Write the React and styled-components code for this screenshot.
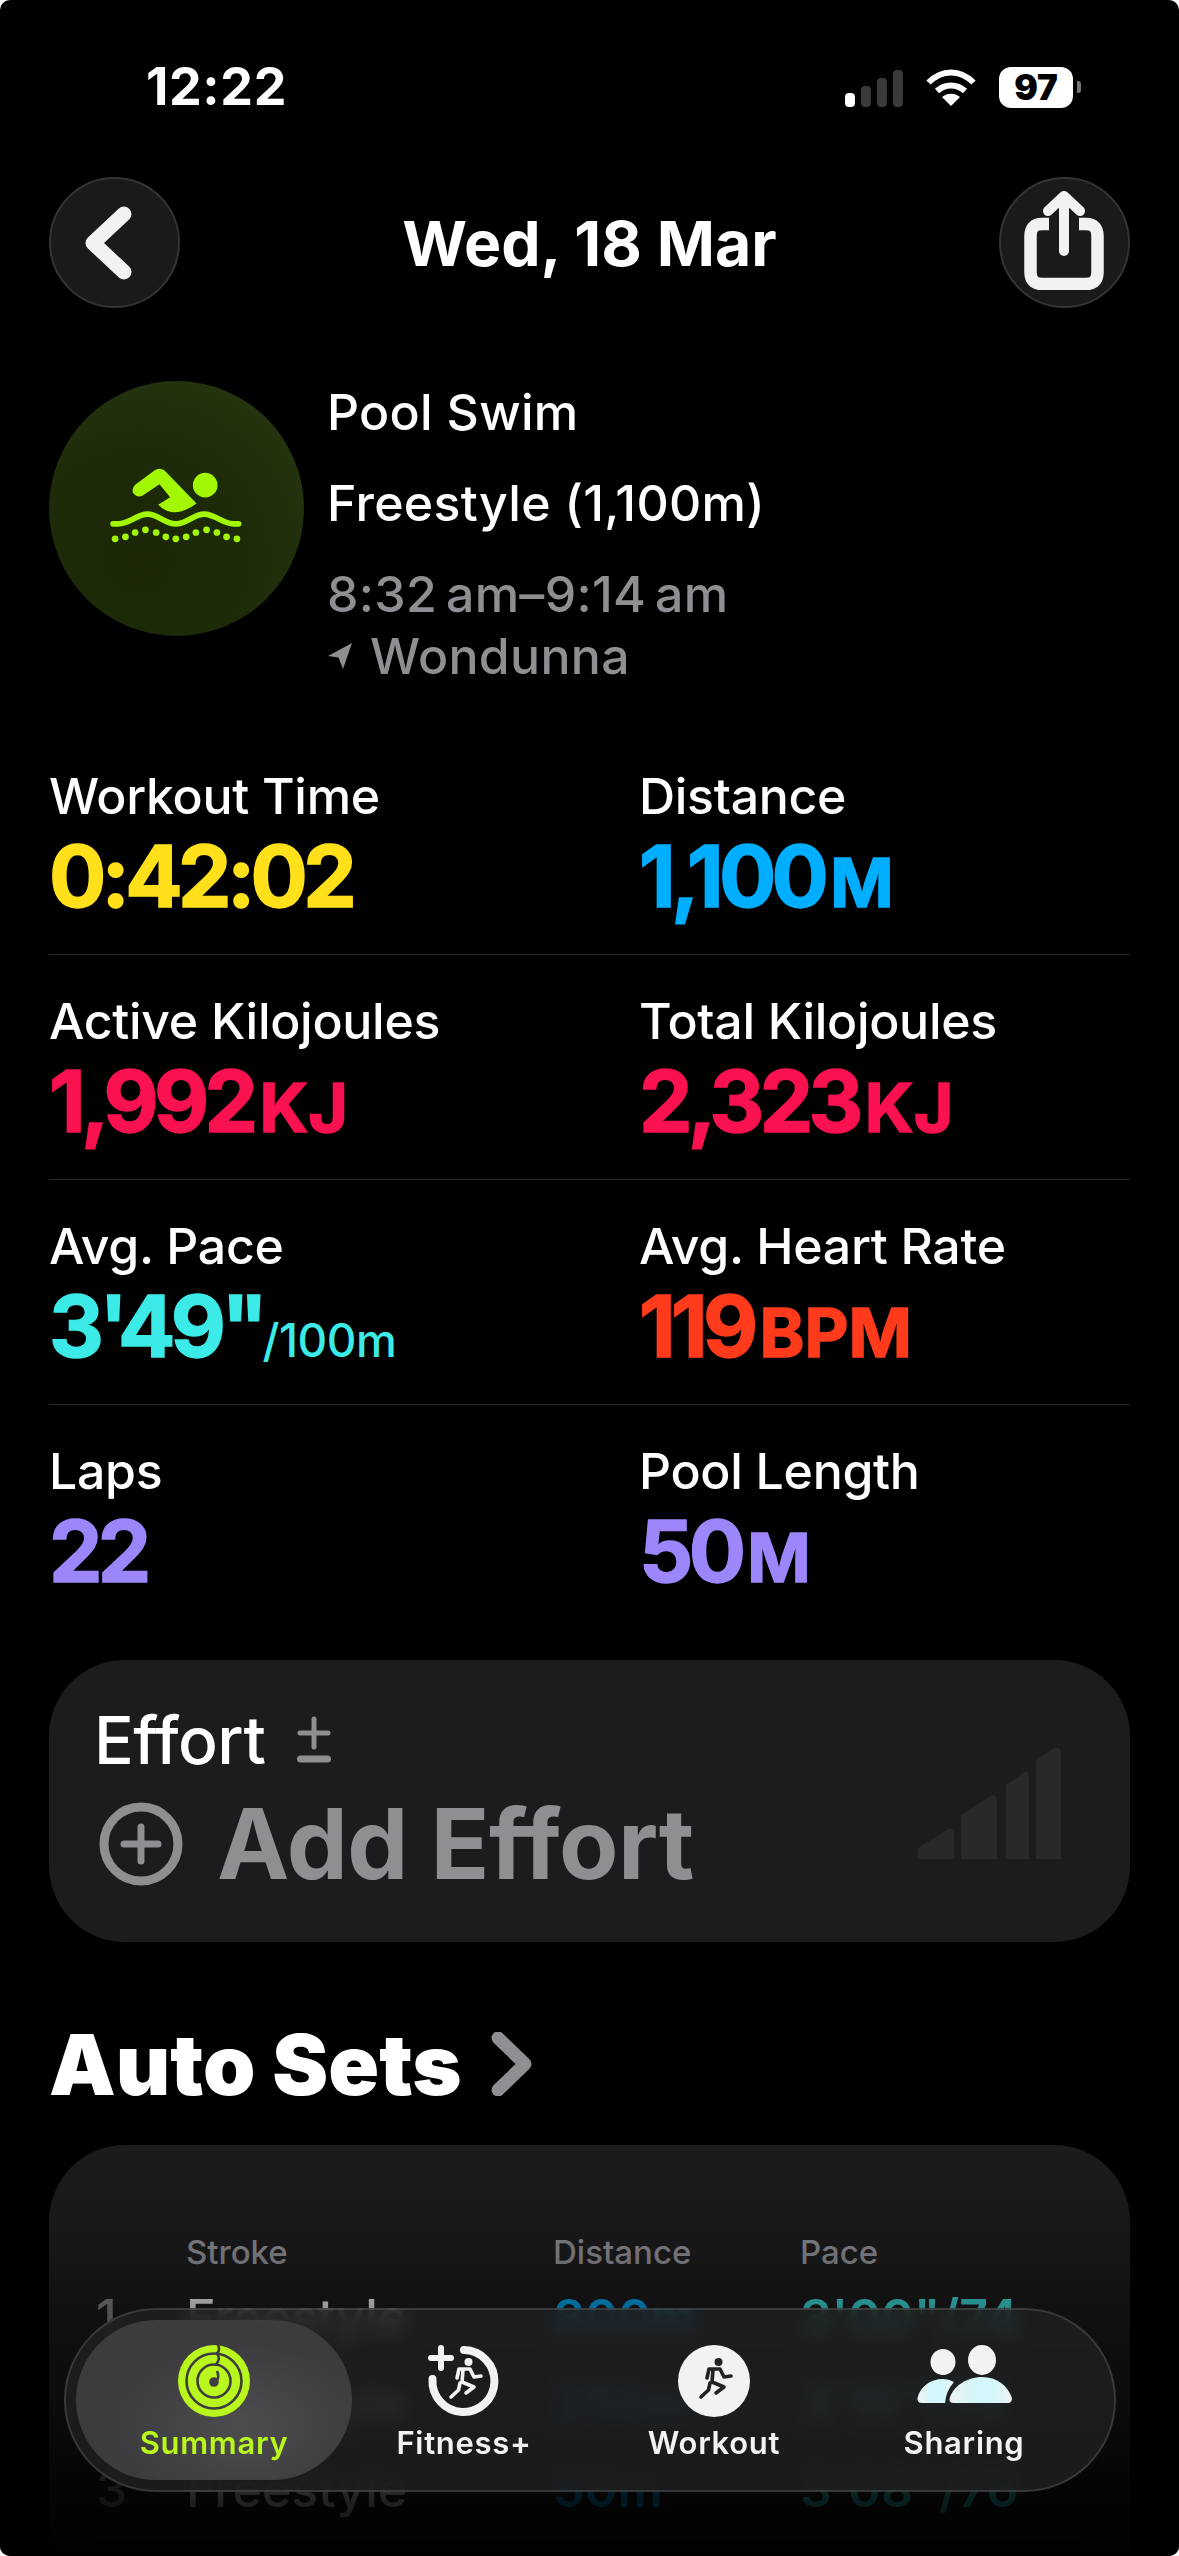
import React from "react";
import styled, { createGlobalStyle } from "styled-components";

const Global = createGlobalStyle`
  html, body { margin: 0; padding: 0; background: #fff; }
  * { box-sizing: border-box; }
`;

const SANS = `Inter, "Liberation Sans", sans-serif`;

const Screen = styled.div`
  position: relative;
  width: 1179px;
  height: 2556px;
  overflow: hidden;
  background: #000;
  color: #fff;
  font-family: ${SANS};
  padding: 0 49px;
  border-radius: 10px;
`;

const StatusBar = styled.div`
  height: 177px;
  display: flex;
  align-items: flex-start;
  justify-content: space-between;
  padding: 57px 0 0 97px;
`;
const Clock = styled.div`
  font-size: 52px;
  line-height: 60px;
  font-weight: 700;
  letter-spacing: 0.6px;
`;
const StatusIcons = styled.div`
  display: flex;
  align-items: center;
  gap: 23px;
  margin: 10px 57px 0 0;
  height: 41px;
`;
const Signal = styled.div`
  display: flex;
  align-items: flex-end;
  gap: 6px;
  height: 37px;
  margin-top: 2px;
`;
const SignalBar = styled.span`
  width: 10px;
  height: ${(p) => p.$h}px;
  border-radius: 4px;
  background: ${(p) => (p.$on ? "#fff" : "#3a3a3c")};
`;
const Battery = styled.div`
  position: relative;
  width: 74px;
  height: 41px;
  border-radius: 12px;
  background: #fff;
  color: #000;
  font-size: 35px;
  font-weight: 900;
  line-height: 41px;
  text-align: center;
  &::after {
    content: "";
    position: absolute;
    right: -8px;
    top: 14px;
    width: 4px;
    height: 12px;
    border-radius: 0 3px 3px 0;
    background: #77777b;
  }
`;

const NavBar = styled.div`
  display: flex;
  align-items: center;
  justify-content: space-between;
  height: 131px;
`;
const RoundButton = styled.div`
  width: 131px;
  height: 131px;
  border-radius: 50%;
  background: #1a1a1a;
  border: 2px solid #343434;
  display: flex;
  align-items: center;
  justify-content: center;
`;
const BackGlyph = styled.svg`
  width: 60px;
  height: 84px;
  margin-right: 14px;
`;
const ShareGlyph = styled.svg`
  width: 80px;
  height: 100px;
  margin-top: -6px;
`;
const Title = styled.div`
  font-size: 62.5px;
  font-weight: 700;
`;

const Hero = styled.div`
  display: flex;
  gap: 23px;
  margin-top: 73px;
  height: 349px;
`;
const HeroBadge = styled.div`
  width: 255px;
  height: 255px;
  flex: none;
  border-radius: 50%;
  background: radial-gradient(circle at 35% 70%, #1b2706 0%, #1e2b09 45%, #283a12 100%);
`;
const HeroText = styled.div`
  display: flex;
  flex-direction: column;
  margin-top: 1px;
`;
const HeroLine = styled.div`
  font-size: 50px;
  font-weight: 500;
  line-height: 60px;
  height: 60px;
  margin-bottom: ${(p) => p.$after ?? 31}px;
  color: ${(p) => (p.$dim ? "#8e8e93" : "#fff")};
  display: flex;
  align-items: center;
  gap: 17px;
  letter-spacing: 0.3px;
  white-space: pre;
`;

const Metrics = styled.div``;
const MetricRow = styled.div`
  display: grid;
  grid-template-columns: 590px 1fr;
  height: 225px;
  padding-top: 36px;
  border-bottom: ${(p) => (p.$last ? "none" : "1.5px solid #2a2a2c")};
`;
const Metric = styled.div`
  display: flex;
  flex-direction: column;
`;
const MetricLabel = styled.div`
  font-size: 50px;
  font-weight: 500;
  line-height: 60px;
  letter-spacing: -0.3px;
`;
const MetricValue = styled.div`
  font-size: 85px;
  font-weight: 700;
  line-height: 84px;
  margin-top: 9px;
  color: ${(p) => p.$color};
  -webkit-text-stroke: 1.5px ${(p) => p.$color};
  letter-spacing: -4.7px;
  white-space: nowrap;
`;
const MetricUnit = styled.span`
  font-size: 68px;
  letter-spacing: 0;
  margin-left: 6px;
`;
const MetricSuffix = styled.span`
  font-size: 46px;
  font-weight: 500;
  letter-spacing: -0.5px;
  -webkit-text-stroke: 0;
  margin-left: -1px;
`;

const EffortCard = styled.div`
  margin-top: 30px;
  height: 282px;
  border-radius: 76px;
  background: #1c1c1e;
  padding: 44px 41px 0 45px;
`;
const EffortHead = styled.div`
  display: flex;
  align-items: center;
  gap: 32px;
  font-size: 66px;
  font-weight: 500;
  line-height: 72px;
  letter-spacing: -0.5px;
`;
const EffortBody = styled.div`
  display: flex;
  align-items: center;
  justify-content: space-between;
  margin-top: 16px;
`;
const AddEffort = styled.div`
  display: flex;
  align-items: center;
  gap: 34px;
  color: #8e8e93;
  font-size: 97px;
  font-weight: 700;
  line-height: 104px;
  margin-left: 5px;
  letter-spacing: -0.5px;
`;
const EffortBars = styled.svg`
  width: 146px;
  height: 114px;
  margin: -80px 26px 0 0;
`;

const SectionTitle = styled.div`
  display: flex;
  align-items: center;
  gap: 28px;
  margin-top: 72px;
  height: 100px;
  font-size: 84px;
  font-weight: 900;
`;

const SetsCard = styled.div`
  margin-top: 31px;
  height: 520px;
  border-radius: 76px;
  background: #1c1c1e;
  padding: 87px 47px 0;
`;
const SetRow = styled.div`
  display: grid;
  grid-template-columns: 90px 367px 247px 1fr;
  align-items: baseline;
  height: ${(p) => p.$h}px;
  font-size: 50px;
  font-weight: 500;
  white-space: nowrap;
`;
const SetHeadCell = styled.div`
  font-size: 33px;
  font-weight: 500;
  color: #8e8e93;
`;
const SetIndex = styled.div`
  color: #8e8e93;
`;
const SetName = styled.div`
  color: #fff;
`;
const SetDistance = styled.div`
  color: #00b2ff;
  font-weight: 600;
`;
const SetPace = styled.div`
  color: #40e8e8;
  font-weight: 600;
`;
const SetDivider = styled.div`
  height: 1.5px;
  background: #38383a;
  margin-top: 6px;
`;

const BottomFade = styled.div`
  position: absolute;
  left: 0;
  right: 0;
  top: 2140px;
  bottom: 0;
  background: linear-gradient(
    to bottom,
    rgba(0, 0, 0, 0) 0px,
    rgba(0, 0, 0, 0.2) 115px,
    rgba(0, 0, 0, 0.42) 170px,
    rgba(0, 0, 0, 0.58) 260px,
    rgba(0, 0, 0, 0.87) 360px,
    rgba(0, 0, 0, 0.96) 416px
  );
`;

const TabBar = styled.div`
  position: absolute;
  left: 64px;
  top: 2308px;
  width: 1052px;
  height: 184px;
  border-radius: 92px;
  background: rgba(32, 32, 34, 0.8);
  backdrop-filter: blur(9px);
  -webkit-backdrop-filter: blur(9px);
  box-shadow: inset 0 0 0 2px rgba(255, 255, 255, 0.13);
  display: grid;
  grid-template-columns: repeat(4, 250px);
  padding-left: 25px;
`;
const ActivePill = styled.div`
  position: absolute;
  left: 12px;
  top: 12px;
  width: 276px;
  height: 160px;
  border-radius: 80px;
  background: radial-gradient(ellipse at 60% 65%, rgba(80, 80, 82, 0.95) 0%, rgba(62, 62, 64, 0.95) 55%);
`;
const Tab = styled.div`
  position: relative;
  display: flex;
  flex-direction: column;
  align-items: center;
  padding-top: 33px;
  color: ${(p) => (p.$active ? "#b8f61e" : "#f2f2f2")};
`;
const TabIcon = styled.svg`
  width: ${(p) => p.$w || 80}px;
  height: 80px;
  display: block;
`;
const TabLabel = styled.div`
  margin-top: 4px;
  font-size: 31px;
  line-height: 36px;
  font-weight: 600;
  letter-spacing: 0.7px;
`;

const Runner = ({ color, sw = 4.6 }) => (
  <g fill="none" stroke={color} strokeWidth={sw} strokeLinecap="round" strokeLinejoin="round">
    <circle cx="44.5" cy="21" r="4" fill={color} stroke="none" />
    <path d="M33 37 L35 28 L46 28 L50 36 L57 35" />
    <path d="M39 29 L38 41 L50 46 L42 52" />
    <path d="M36 42 L34.5 49 L27 56" />
  </g>
);

const SwimIcon = () => (
  <svg viewBox="25 33 764 764" width="255" height="255">
    <g fill="#a2f703">
      <circle cx="493" cy="345" r="37" />
      <path d="M343 300 Q358 291 372 302 L467 400 Q430 428 395 426 Q372 424 352 404 L388 381 L356 342 L306 376 Q290 384 278 370 Q270 356 284 343 Z" />
      {[[223,506],[254,500],[283,487],[314,479],[346,487],[375,500],[405,506],[436,500],[465,487],[497,479],[528,487],[557,500],[588,506]].map(([x,y],i)=>(
        <circle key={i} cx={x} cy={y} r="10" />
      ))}
    </g>
    <path
      d="M217 461 H232 C268 461 288 432 320 432 C352 432 372 461 405 461 C438 461 458 432 490 432 C522 432 546 461 578 461 H593"
      fill="none"
      stroke="#a2f703"
      strokeWidth="17"
      strokeLinecap="round"
    />
  </svg>
);

export default function App() {
  return (
    <>
      <Global />
      <Screen>
        <StatusBar>
          <Clock>12:22</Clock>
          <StatusIcons>
            <Signal>
              <SignalBar $h={14} $on />
              <SignalBar $h={21} />
              <SignalBar $h={29} />
              <SignalBar $h={37} />
            </Signal>
            <svg width="50" height="37" viewBox="0 0 50 37">
              <g fill="none" stroke="#fff" strokeWidth="6">
                <path d="M2.5 13.5 C16 0 34 0 47.5 13.5" />
                <path d="M11 22 C19 14.5 31 14.5 39 22" />
              </g>
              <path d="M25 37 L16 28 C21 23.5 29 23.5 34 28 Z" fill="#fff" />
            </svg>
            <Battery>97</Battery>
          </StatusIcons>
        </StatusBar>

        <NavBar>
          <RoundButton>
            <BackGlyph viewBox="0 0 60 84">
              <path d="M46 13 L15 42 L46 71" fill="none" stroke="#f2f2f2" strokeWidth="15" strokeLinecap="round" strokeLinejoin="round" />
            </BackGlyph>
          </RoundButton>
          <Title>Wed, 18 Mar</Title>
          <RoundButton>
            <ShareGlyph viewBox="0 0 80 100">
              <g fill="none" stroke="#f2f2f2" strokeLinecap="round" strokeLinejoin="round">
                <path d="M25 34 H18 Q6.5 34 6.5 46 V82 Q6.5 94 18 94 H62 Q73.5 94 73.5 82 V46 Q73.5 34 62 34 H55" strokeWidth="12.5" strokeLinecap="butt" />
                <path d="M40 61 V10" strokeWidth="10" />
                <path d="M24 21 L40 6 L56 21" strokeWidth="10" />
              </g>
            </ShareGlyph>
          </RoundButton>
        </NavBar>

        <Hero>
          <HeroBadge>
            <SwimIcon />
          </HeroBadge>
          <HeroText>
            <HeroLine>Pool Swim</HeroLine>
            <HeroLine>Freestyle (1,100m)</HeroLine>
            <HeroLine $dim $after={2}>{"8:32\u2009am–9:14\u2009am"}</HeroLine>
            <HeroLine $dim $after={0}>
              <svg width="26" height="28" viewBox="0 0 26 28">
                <path d="M25 1 L16 27 L11.5 15.5 L1 14 Z" fill="#8e8e93" />
              </svg>
              Wondunna
            </HeroLine>
          </HeroText>
        </Hero>

        <Metrics>
          <MetricRow>
            <Metric>
              <MetricLabel>Workout Time</MetricLabel>
              <MetricValue $color="#ffe01a">0:42:02</MetricValue>
            </Metric>
            <Metric>
              <MetricLabel>Distance</MetricLabel>
              <MetricValue $color="#00aeff">1,100<MetricUnit>M</MetricUnit></MetricValue>
            </Metric>
          </MetricRow>
          <MetricRow>
            <Metric>
              <MetricLabel>Active Kilojoules</MetricLabel>
              <MetricValue $color="#fa1150">1,992<MetricUnit>KJ</MetricUnit></MetricValue>
            </Metric>
            <Metric>
              <MetricLabel>Total Kilojoules</MetricLabel>
              <MetricValue $color="#fa1150">2,323<MetricUnit>KJ</MetricUnit></MetricValue>
            </Metric>
          </MetricRow>
          <MetricRow>
            <Metric>
              <MetricLabel>Avg. Pace</MetricLabel>
              <MetricValue $color="#3ceae7">3'49"<MetricSuffix>/100m</MetricSuffix></MetricValue>
            </Metric>
            <Metric>
              <MetricLabel>Avg. Heart Rate</MetricLabel>
              <MetricValue $color="#ff3b1c">119<MetricUnit>BPM</MetricUnit></MetricValue>
            </Metric>
          </MetricRow>
          <MetricRow $last>
            <Metric>
              <MetricLabel>Laps</MetricLabel>
              <MetricValue $color="#9d86fb">22</MetricValue>
            </Metric>
            <Metric>
              <MetricLabel>Pool Length</MetricLabel>
              <MetricValue $color="#9d86fb">50<MetricUnit>M</MetricUnit></MetricValue>
            </Metric>
          </MetricRow>
        </Metrics>

        <EffortCard>
          <EffortHead>
            Effort
            <svg width="34" height="48" viewBox="0 0 34 48">
              <g stroke="#8e8e93" strokeLinecap="round" fill="none">
                <path d="M17 3 V31" strokeWidth="5" />
                <path d="M3 17 H31" strokeWidth="5" />
                <path d="M3.5 43 H30.5" strokeWidth="7" />
              </g>
            </svg>
          </EffortHead>
          <EffortBody>
            <AddEffort>
              <svg width="84" height="84" viewBox="0 0 84 84">
                <circle cx="42" cy="42" r="37" fill="none" stroke="#8e8e93" strokeWidth="9" />
                <path d="M42 25 V59 M25 42 H59" fill="none" stroke="#8e8e93" strokeWidth="7" strokeLinecap="round" />
              </svg>
              Add Effort
            </AddEffort>
            <EffortBars viewBox="0 0 146 114">
              <g fill="#29292c">
                <path d="M1 112 V101 L28 84 Q37 77 37 90 V112 Z" />
                <path d="M44 112 V68 L72 50 Q80 44 80 56 V112 Z" />
                <path d="M89 112 V38 L106 26 Q112 22 112 32 V112 Z" />
                <path d="M119 112 V12 L136 2 Q144 -2 144 8 V112 Z" />
              </g>
            </EffortBars>
          </EffortBody>
        </EffortCard>

        <SectionTitle>
          Auto Sets
          <svg width="44" height="64" viewBox="0 0 44 64">
            <path d="M8 6 L35 32 L8 58" fill="none" stroke="#8e8e93" strokeWidth="13" strokeLinecap="round" strokeLinejoin="round" />
          </svg>
        </SectionTitle>

        <SetsCard>
          <SetRow $h={55}>
            <span />
            <SetHeadCell>Stroke</SetHeadCell>
            <SetHeadCell>Distance</SetHeadCell>
            <SetHeadCell>Pace</SetHeadCell>
          </SetRow>
          <SetRow $h={86}>
            <SetIndex>1</SetIndex>
            <SetName>Freestyle</SetName>
            <SetDistance>800m</SetDistance>
            <SetPace>3'00"/74</SetPace>
          </SetRow>
          <SetRow $h={86}>
            <SetIndex>2</SetIndex>
            <SetName>Freestyle</SetName>
            <SetDistance>250m</SetDistance>
            <SetPace>3'15"/74</SetPace>
          </SetRow>
          <SetRow $h={72}>
            <SetIndex>3</SetIndex>
            <SetName>Freestyle</SetName>
            <SetDistance>50m</SetDistance>
            <SetPace>3'08"/76</SetPace>
          </SetRow>
          <SetDivider />
        </SetsCard>

        <BottomFade />

        <TabBar>
          <ActivePill />
          <Tab $active>
            <TabIcon viewBox="0 0 80 80">
              <circle cx="40" cy="40" r="36" fill="#b8f61e" />
              <g fill="none" stroke="#3d3d3f" strokeWidth="2.6" strokeLinecap="round">
                <circle cx="40" cy="40" r="27.5" />
                <circle cx="40" cy="40" r="16.5" />
                <path d="M44 4 Q46.5 9 43 12.5" />
                <path d="M43 12.5 Q47 18 42 23.5" />
              </g>
              <circle cx="40" cy="41" r="4.8" fill="#3d3d3f" />
              <path d="M42 40 Q46 37 43 30" fill="none" stroke="#3d3d3f" strokeWidth="2.6" />
            </TabIcon>
            <TabLabel>Summary</TabLabel>
          </Tab>
          <Tab>
            <TabIcon viewBox="0 0 80 80">
              <path d="M40 9 A31 31 0 1 1 8.5 38" fill="none" stroke="#f2f2f2" strokeWidth="8" strokeLinecap="round" />
              <path d="M17 7 V27 M7 17 H27" fill="none" stroke="#f2f2f2" strokeWidth="6" strokeLinecap="round" />
              <Runner color="#f2f2f2" sw={3.6} />
            </TabIcon>
            <TabLabel>Fitness+</TabLabel>
          </Tab>
          <Tab>
            <TabIcon viewBox="0 0 80 80">
              <circle cx="40" cy="40" r="36" fill="#f2f2f2" />
              <Runner color="#222224" sw={3.6} />
            </TabIcon>
            <TabLabel>Workout</TabLabel>
          </Tab>
          <Tab>
            <TabIcon $w={100} viewBox="0 0 100 80">
              <defs>
                <linearGradient id="shareBody" x1="0" x2="1" y1="0" y2="0">
                  <stop offset="0" stopColor="#f2f2f2" />
                  <stop offset="0.35" stopColor="#d5f6f8" />
                  <stop offset="0.7" stopColor="#d3f8fb" />
                  <stop offset="1" stopColor="#f2f2f2" />
                </linearGradient>
              </defs>
              <ellipse cx="29" cy="21" rx="12.5" ry="13" fill="#f2f2f2" />
              <ellipse cx="68" cy="19" rx="14" ry="15" fill="#f2f2f2" />
              <path d="M41 62 H8 Q3 62 3.5 57 C6 46 16 38 29 38 Q35 38 40 41 Q32 50 31 62 Z" fill="url(#shareBody)" />
              <path d="M40 62 Q34 62 36 56 C40 45 53 36 68 36 C83 36 94 45 98 57 Q98 62 94 62 Z" fill="url(#shareBody)" />
            </TabIcon>
            <TabLabel>Sharing</TabLabel>
          </Tab>
        </TabBar>
      </Screen>
    </>
  );
}
